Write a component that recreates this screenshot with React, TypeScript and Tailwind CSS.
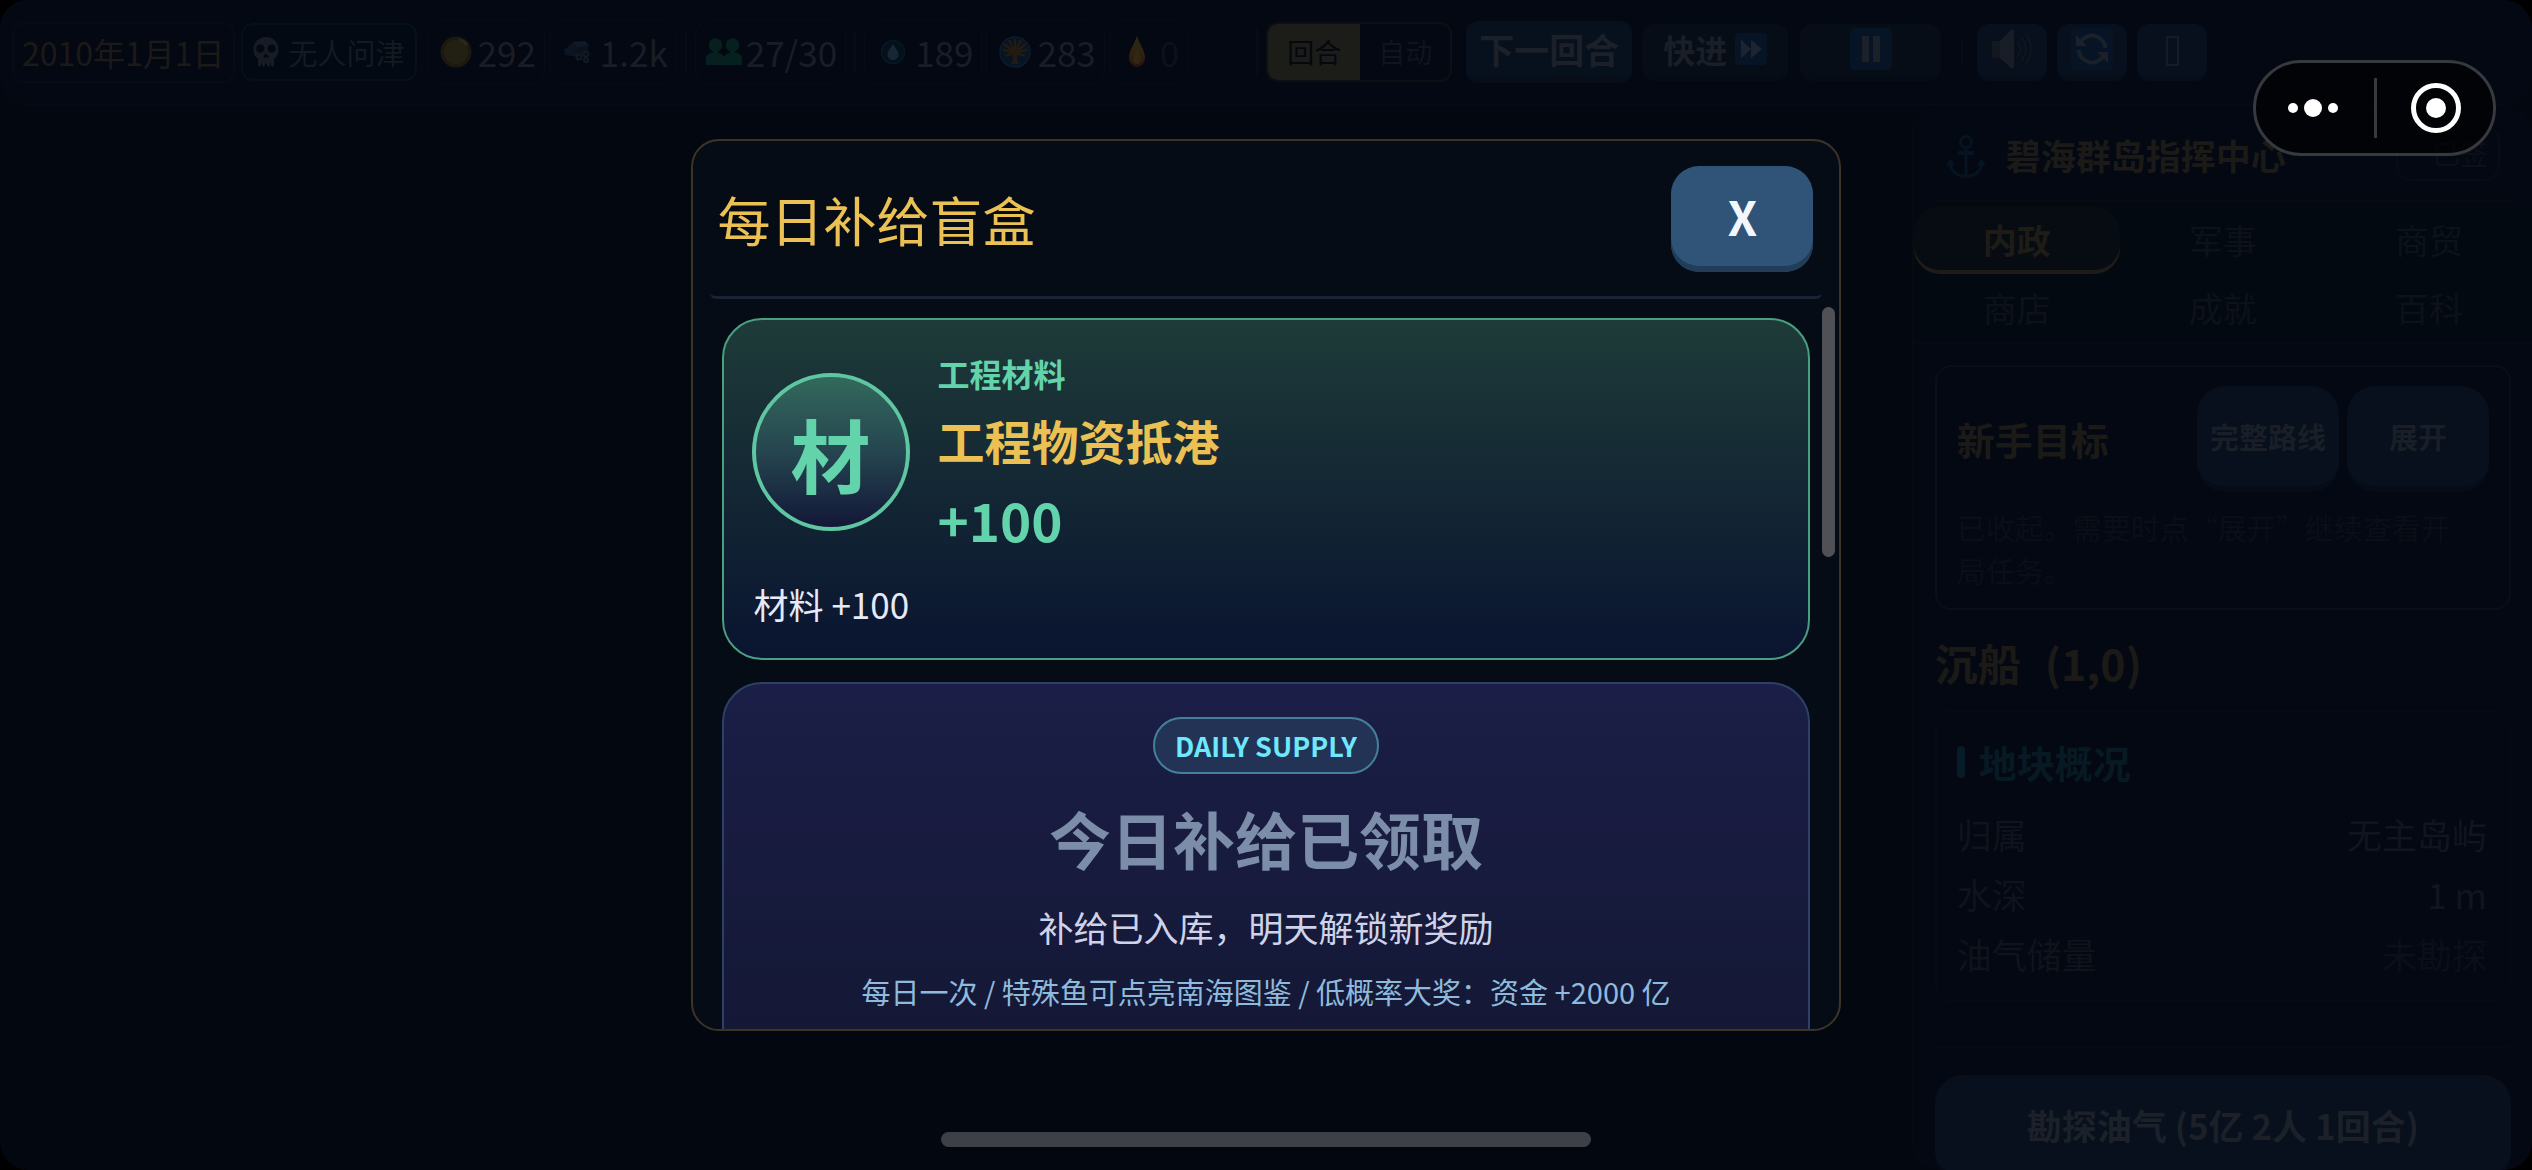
import React from "react";

type IconProps = { className?: string };

function SkullIcon({ className }: IconProps) {
  return (
    <svg viewBox="0 0 26 30" className={className} aria-hidden="true">
      <path
        fillRule="evenodd"
        fill="#181b24"
        d="M13 0C5.500 0 0.500 5.500 0.500 12.500c0 4 1.200 7 3.800 8.800.5.400.7.900.7 1.500V28c0 1 .7 1.600 1.500 1.600S8 29 8 28v-1.500h1V28c0 1 .7 1.600 1.500 1.600S12 29 12 28v-1.500h2V28c0 1 .7 1.600 1.500 1.600S17 29 17 28v-1.500h1V28c0 1 .7 1.600 1.500 1.600S21 29 21 28v-5.200c0-.6.2-1.100.7-1.500 2.600-1.800 3.800-4.800 3.800-8.800C25.500 5.500 20.500 0 13 0ZM7.300 7.500a4 4 0 1 1 0 8 4 4 0 0 1 0-8Zm11.400 0a4 4 0 1 1 0 8 4 4 0 0 1 0-8ZM13 17c1.500 0 2.600 2 2.600 3.200 0 .8-.8.800-1.300.5-.8-.5-1.800-.5-2.600 0-.5.300-1.300.3-1.300-.5C10.400 19 11.500 17 13 17Z"
      />
    </svg>
  );
}

function CoinIcon({ className }: IconProps) {
  return (
    <svg viewBox="0 0 32 32" className={className} aria-hidden="true">
      <circle cx="16" cy="16" r="15.500" fill="#1b1a10" />
      <circle cx="16" cy="16" r="12" fill="#212013" />
      <path d="M19 2.500a14 14 0 0 1 9 6l-2 1.500a12 12 0 0 0-7-5Z" fill="#282a24" />
    </svg>
  );
}

function OreIcon({ className }: IconProps) {
  return (
    <svg viewBox="0 0 32 32" className={className} aria-hidden="true">
      <path d="M2 14 11 6l12-1 4 4-2 9-9 3-13-2Z" fill="#0b1420" />
      <path d="M11 6l12-1 4 4-12 3Z" fill="#0f1a27" />
      <path d="M15 12l12-3-2 9-9 3Z" fill="#0a121d" />
      <g fill="none" stroke="#131a24" strokeWidth="2">
        <circle cx="17" cy="21" r="2.500" />
        <circle cx="24" cy="18" r="2.500" />
        <circle cx="24" cy="24" r="2" />
      </g>
    </svg>
  );
}

function PeopleIcon({ className }: IconProps) {
  return (
    <svg viewBox="0 0 36 28" className={className} aria-hidden="true">
      <g fill="#05201f">
        <ellipse cx="9.500" cy="7" rx="6.800" ry="6.800" />
        <ellipse cx="26.500" cy="7" rx="6.800" ry="6.800" />
        <rect x="7" y="12" width="5" height="5" />
        <rect x="24" y="12" width="5" height="5" />
        <path d="M0 27v-6c0-4 3-6 7-6h5c3 0 5 2 6 4 1-2 3-4 6-4h5c4 0 7 2 7 6v6Z" />
      </g>
    </svg>
  );
}

function WaterIcon({ className }: IconProps) {
  return (
    <svg viewBox="0 0 32 32" className={className} aria-hidden="true">
      <circle cx="16" cy="16" r="11.500" fill="#04111d" stroke="#061726" strokeWidth="1.500" />
      <path d="M16 8c3 4.500 5.500 7.500 5.500 10.500a5.500 5.500 0 0 1-11 0C10.500 15.500 13 12.500 16 8Z" fill="#182532" />
    </svg>
  );
}

function PalmIcon({ className }: IconProps) {
  return (
    <svg viewBox="0 0 32 32" className={className} aria-hidden="true">
      <circle cx="16" cy="16" r="15" fill="#061423" stroke="#0b1c2c" strokeWidth="1.500" />
      <g stroke="#231a12" strokeWidth="2.500" strokeLinecap="round">
        <path d="M16 17V4M16 17 10.500 5M16 17 21.500 5M16 17 6 8.500M16 17 26 8.500M16 17 4.500 14M16 17 27.500 14M16 17 7 19.500M16 17 25 19.500" />
      </g>
      <path d="M14 16h4l.5 10 2.500 2h-10l2.500-2Z" fill="#231a12" />
    </svg>
  );
}

function OilIcon({ className }: IconProps) {
  return (
    <svg viewBox="0 0 32 32" className={className} aria-hidden="true">
      <defs>
        <linearGradient id="oil" x1="0" y1="0" x2="0" y2="1">
          <stop offset="0" stopColor="#2b2a12" />
          <stop offset="0.600" stopColor="#2f2211" />
          <stop offset="1" stopColor="#271210" />
        </linearGradient>
      </defs>
      <path d="M15 0c3 9 8 14.500 8 22a8 9 0 0 1-16 0C7 14.500 12 9 15 0Z" fill="url(#oil)" />
      <path d="M15 14c2 4 4 6.500 4 9.500a4 4.500 0 0 1-8 0c0-3 2-5.500 4-9.500Z" fill="#322812" />
    </svg>
  );
}

function SpeakerIcon({ className }: IconProps) {
  return (
    <svg viewBox="0 0 42 40" className={className} aria-hidden="true">
      <path d="M1 12h8v17H1Z" fill="#131720" />
      <path d="M9 12 20 1q3-2 3 2v34q0 4-3 2L9 29Z" fill="#191d26" />
      <g fill="none" stroke="#121721" strokeWidth="1.500" strokeLinecap="round">
        <path d="M27 13q5 7 0 14M31 9q8 11 0 22M35 5q10 15 0 30" />
      </g>
    </svg>
  );
}

function RefreshIcon({ className }: IconProps) {
  return (
    <svg viewBox="0 0 42 42" className={className} aria-hidden="true">
      <rect width="42" height="42" rx="5" fill="#061425" />
      <g fill="none" stroke="#1b2029" strokeWidth="4">
        <path d="M9 15A13.500 13.500 0 0 1 34.500 20" />
        <path d="M33 27A13.500 13.500 0 0 1 7.500 22" />
      </g>
      <path d="M5 7v11h11ZM37 35V24H26Z" fill="#1b2029" />
    </svg>
  );
}

function FastIcon({ className }: IconProps) {
  return (
    <svg viewBox="0 0 32 32" className={className} aria-hidden="true">
      <rect width="32" height="32" rx="4" fill="#061425" />
      <path d="M6 6.500 16 16 6 25.500ZM16 6.500 27 16 16 25.500Z" fill="#1b2431" />
    </svg>
  );
}

function PauseIcon({ className }: IconProps) {
  return (
    <svg viewBox="0 0 42 42" className={className} aria-hidden="true">
      <rect width="42" height="42" rx="5" fill="#061425" />
      <path d="M12 8h7v26h-7ZM23 8h7v26h-7Z" fill="#1b2029" />
    </svg>
  );
}

function AnchorIcon({ className }: IconProps) {
  return (
    <svg viewBox="0 0 40 44" className={className} aria-hidden="true">
      <g fill="none" stroke="#051322" strokeWidth="3">
        <circle cx="20" cy="7" r="5.500" />
        <path d="M20 12v29M4 28c1 8 7 13.500 16 13.500S35 36 36 28" />
      </g>
      <path d="M12 16h16v4H12ZM0 31.500 4 23l5 7ZM40 31.500 36 23l-5 7Z" fill="#051322" />
    </svg>
  );
}

function Stat({ icon, value, dim }: { icon: React.ReactNode; value: string; dim?: boolean }) {
  return (
    <div className="flex h-[65px] items-center gap-1.5 rounded-2xl border border-[#070c15] pl-3 pr-2">
      {icon}
      <span className={dim ? "text-[35px] leading-[48px] text-[#0d1119]" : "text-[35px] leading-[48px] text-[#1a1d25]"}>
        {value}
      </span>
    </div>
  );
}

function Divider() {
  return <div className="mx-1 h-10 w-0.5 bg-[#070b14]" />;
}

function TopBar() {
  const square =
    "flex h-[57px] w-[70px] items-center justify-center rounded-xl border-b-[6px] border-[#060e19] bg-[#07101c]";
  return (
    <header className="flex h-[106px] shrink-0 items-center rounded-[26px] border-b-2 border-[#060a13] bg-[#040812] pl-3">
      <div className="flex h-[61px] items-center rounded-xl border-2 border-[#060b14] px-2 text-[32px] leading-[48px] text-[#1c1a18]">
        2010年1月1日
      </div>
      <div className="ml-1.5 flex h-[58px] items-center gap-2.5 rounded-xl border-2 border-[#05101a] bg-[#020912] px-2.5 text-[29px] leading-[44px] text-[#141a21]">
        <SkullIcon className="h-[30px] w-[26px]" />
        无人问津
      </div>
      <div className="ml-2.5 flex items-center gap-1">
        <Stat icon={<CoinIcon className="size-8" />} value="292" />
        <Stat icon={<OreIcon className="size-8" />} value="1.2k" />
        <Divider />
        <Stat icon={<PeopleIcon className="-mx-0.5 h-7 w-9" />} value="27/30" />
        <Divider />
        <Stat icon={<WaterIcon className="size-8" />} value="189" />
        <Stat icon={<PalmIcon className="size-8" />} value="283" />
        <Stat icon={<OilIcon className="size-8" />} value="0" dim />
      </div>
      <div className="ml-[68px] flex items-center">
        <div className="h-12 w-0.5 bg-[#070b14]" />
        <div className="ml-2 flex h-[60px] overflow-hidden rounded-xl border-2 border-[#0d1012] text-[27px]">
          <button type="button" className="w-[92px] bg-[#1c1c18] text-[#04080f]">
            回合
          </button>
          <button type="button" className="w-[90px] text-[#10141d]">
            自动
          </button>
        </div>
        <button
          type="button"
          className="ml-3.5 h-[62px] w-[166px] rounded-xl border-b-[6px] border-[#070e19] bg-[#07101d] text-[35px] leading-[48px] font-bold text-[#1c2029]"
        >
          下一回合
        </button>
        <button
          type="button"
          className="ml-2.5 flex h-[57px] w-[146px] items-center justify-center gap-2 rounded-xl border-b-[6px] border-[#050c15] bg-[#060d17] text-[32px] leading-[48px] font-bold text-[#1a1e27]"
        >
          快进
          <FastIcon className="size-8" />
        </button>
        <button
          type="button"
          aria-label="暂停"
          className="ml-3 flex h-[57px] w-[141px] items-center justify-center rounded-xl border-b-[6px] border-[#050c15] bg-[#060d17]"
        >
          <PauseIcon className="size-[42px] shrink-0" />
        </button>
        <div className="ml-5 h-6 w-0.5 bg-[#070b14]" />
        <div className="ml-3.5 flex gap-2.5">
          <button type="button" aria-label="声音" className={square}>
            <SpeakerIcon className="h-10 w-[42px] shrink-0" />
          </button>
          <button type="button" aria-label="刷新" className={square}>
            <RefreshIcon className="size-[42px] shrink-0" />
          </button>
          <button type="button" aria-label="更多" className={square}>
            <span className="mt-1 h-[30px] w-[13px] border-2 border-[#171b24]" />
          </button>
        </div>
      </div>
    </header>
  );
}

const tabs = ["内政", "军事", "商贸", "商店", "成就", "百科"];

const facts = [
  { label: "归属", value: "无主岛屿", tone: "text-[#11151e]" },
  { label: "水深", value: "1 m", tone: "text-[#11151e]" },
  { label: "油气储量", value: "未勘探", tone: "text-[#0a0f18]" },
];

function SideButton({ label }: { label: string }) {
  return (
    <button
      type="button"
      className="h-[106px] w-[142px] rounded-[28px] border-b-[6px] border-[#060d18] bg-[#07101c] text-[29px] leading-[44px] font-bold text-[#1a1e27]"
    >
      {label}
    </button>
  );
}

function SidePanel() {
  return (
    <aside className="flex w-[24.5%] shrink-0 flex-col overflow-hidden rounded-[26px] border-l-2 border-[#070a11] bg-[#040812]">
      <div className="mx-4 flex h-24 shrink-0 items-center rounded-lg border-b-2 border-[#070b12] pr-4 pl-4">
        <AnchorIcon className="mt-2 h-11 w-10" />
        <h2 className="mt-1 ml-5 text-[35px] leading-[48px] font-bold text-[#1b1a17]">碧海群岛指挥中心</h2>
        <button
          type="button"
          className="ml-auto h-14 w-[104px] rounded-2xl border-2 border-[#080c14] pr-2.5 text-right text-[28px] text-[#0c1018]"
        >
          已签
        </button>
      </div>
      <nav className="grid shrink-0 grid-cols-3 border-b-2 border-[#060b13] bg-[#030911] pt-1">
        {tabs.map((tab, i) => (
          <button
            key={tab}
            type="button"
            className={
              i === 0
                ? "h-[68px] rounded-[26px] bg-[#070b12] text-[34px] leading-[48px] font-bold text-[#1e1c16] shadow-[inset_0_-4px_0_#1e1c16]"
                : "h-[68px] text-[34px] leading-[48px] text-[#0d111a]"
            }
          >
            {tab}
          </button>
        ))}
      </nav>
      <div className="flex min-h-0 flex-1 flex-col px-[21px]">
        <section className="mt-[21px] shrink-0 rounded-2xl border-2 border-[#0b0e13] px-5 pt-[19px] pb-4">
          <div className="flex items-center gap-2">
            <h3 className="mr-auto text-[38px] leading-[56px] font-bold text-[#1c1a17]">新手目标</h3>
            <SideButton label="完整路线" />
            <SideButton label="展开" />
          </div>
          <p className="mt-3.5 pr-5 text-[29px] leading-[43px] text-[#0a0e17]">
            已收起。需要时点“展开”继续查看开局任务。
          </p>
        </section>
        <h2 className="mt-5 flex shrink-0 gap-6 text-[43px] leading-[64px] font-bold text-[#1c1a17]">
          <span>沉船</span>
          <span>(1,0)</span>
        </h2>
        <section className="mt-4 shrink-0 rounded-2xl border-2 border-[#060b13] px-5 pt-5 pb-4">
          <h3 className="flex items-center gap-3.5 text-[38px] leading-[60px] font-bold text-[#071a24]">
            <span className="h-8 w-2 rounded-sm bg-[#071c27]" />
            地块概况
          </h3>
          <dl className="mt-3">
            {facts.map((fact) => (
              <div key={fact.label} className="flex h-[60px] items-center justify-between pr-0.5 text-[35px] leading-[48px]">
                <dt className="text-[#0f131c]">{fact.label}</dt>
                <dd className={fact.tone}>{fact.value}</dd>
              </div>
            ))}
          </dl>
        </section>
        <div className="mt-11 shrink-0 border-t-2 border-[#060b13] pt-[27px]">
          <button
            type="button"
            className="h-[106px] w-full rounded-[28px] border-b-[6px] border-[#060d18] bg-[#07101c] text-[35px] leading-[48px] font-bold text-[#1c2029]"
          >
            勘探油气 (5亿 2人 1回合)
          </button>
        </div>
      </div>
    </aside>
  );
}

function RewardCard() {
  return (
    <section className="rounded-[40px] border-2 border-[#4a9f80] bg-linear-to-b from-[#1e3b38] via-[#142734] to-[#0a1430] px-7 py-[29px]">
      <div className="flex items-center gap-7">
        <div className="flex size-[158px] items-center justify-center rounded-full border-4 border-[#5fc6a2] bg-linear-to-b from-[#33695c] via-[#25454f] to-[#131737] text-[80px] leading-[112px] font-bold text-[#62d3ab]">
          材
        </div>
        <div className="flex flex-col gap-[11px] font-bold text-[#62d3ab]">
          <p className="text-[32px] leading-[48px]">工程材料</p>
          <h3 className="text-[47px] leading-[64px] text-[#ecc154]">工程物资抵港</h3>
          <p className="text-[53px] leading-[72px]">+100</p>
        </div>
      </div>
      <p className="mt-6 pl-0.5 text-[35px] leading-[50px] text-[#e6eaf8]">材料 +100</p>
    </section>
  );
}

function DailyCard() {
  return (
    <section className="mt-[22px] flex min-h-[1200px] flex-col items-center rounded-[40px] border-2 border-[#2d4068] bg-linear-to-b from-[#1b1e46] from-0% via-[#141835] via-30% to-[#12162f] pt-[33px] text-center">
      <span className="flex h-[57px] items-center rounded-full border-2 border-[#44809b] bg-[#223355] px-5 text-[27px] leading-[40px] font-bold text-[#6de9fd]">
        DAILY SUPPLY
      </span>
      <h3 className="mt-6 text-[62px] leading-[80px] font-bold text-[#7b8da9]">今日补给已领取</h3>
      <p className="mt-6 text-[35px] leading-[50px] text-[#cfd3ea]">补给已入库，明天解锁新奖励</p>
      <p className="mt-[17px] text-[29px] leading-[44px] text-[#8ebbdd]">
        每日一次 / 特殊鱼可点亮南海图鉴 / 低概率大奖：资金 +2000 亿
      </p>
    </section>
  );
}

function SupplyDialog() {
  return (
    <div className="absolute inset-0 flex items-center justify-center">
      <div
        role="dialog"
        aria-labelledby="supply-title"
        className="relative flex h-[76.2%] w-5/11 flex-col overflow-hidden rounded-[28px] border-2 border-[#3c3527] bg-[#060c16]"
      >
        <div className="mx-[17px] flex shrink-0 items-center justify-between rounded-md border-b-[3px] border-[#182436] pt-[25px] pr-[9px] pb-6 pl-2">
          <h2 id="supply-title" className="text-[53px] leading-[72px] text-[#ecc154]">
            每日补给盲盒
          </h2>
          <button
            type="button"
            aria-label="关闭"
            className="h-[106px] w-[142px] rounded-[28px] bg-[#2f5478] pb-1.5 text-[47px] leading-[64px] font-bold text-[#f4f6fd] shadow-[inset_0_-6px_0_#223d58]"
          >
            X
          </button>
        </div>
        <div className="min-h-0 flex-1 overflow-y-auto px-[29px] pt-[19px] [scrollbar-width:none]">
          <RewardCard />
          <DailyCard />
        </div>
        <div className="absolute top-[166px] right-1 h-[250px] w-[13px] rounded-full bg-[#505156]" />
      </div>
    </div>
  );
}

function Capsule() {
  return (
    <div className="absolute top-[60px] right-9 flex h-24 w-[243px] items-center rounded-full border-[3px] border-[#36393e] bg-black/60">
      <button type="button" aria-label="菜单" className="flex h-full flex-1 items-center justify-center gap-1.5 pr-1">
        <span className="size-2.5 rounded-full bg-white" />
        <span className="size-[18px] rounded-full bg-white" />
        <span className="size-2.5 rounded-full bg-white" />
      </button>
      <span className="h-[60px] w-[3px] bg-[#36393e]" />
      <button type="button" aria-label="退出" className="flex h-full flex-1 items-center justify-center pl-0.5">
        <span className="flex size-[50px] items-center justify-center rounded-full border-[5px] border-white">
          <span className="size-5 rounded-full bg-white" />
        </span>
      </button>
    </div>
  );
}

export default function App() {
  return (
    <div className="h-screen bg-black font-['Noto_Sans_CJK_SC',sans-serif]">
      <div className="relative flex h-full flex-col overflow-hidden rounded-[28px] bg-[#03070f]">
        <TopBar />
        <main className="flex min-h-0 flex-1">
          <div className="flex-1" />
          <SidePanel />
        </main>
        <SupplyDialog />
        <Capsule />
        <div className="absolute inset-x-0 bottom-[23px] mx-auto h-[15px] w-[25.7%] rounded-full bg-[#3d4147]" />
      </div>
    </div>
  );
}
